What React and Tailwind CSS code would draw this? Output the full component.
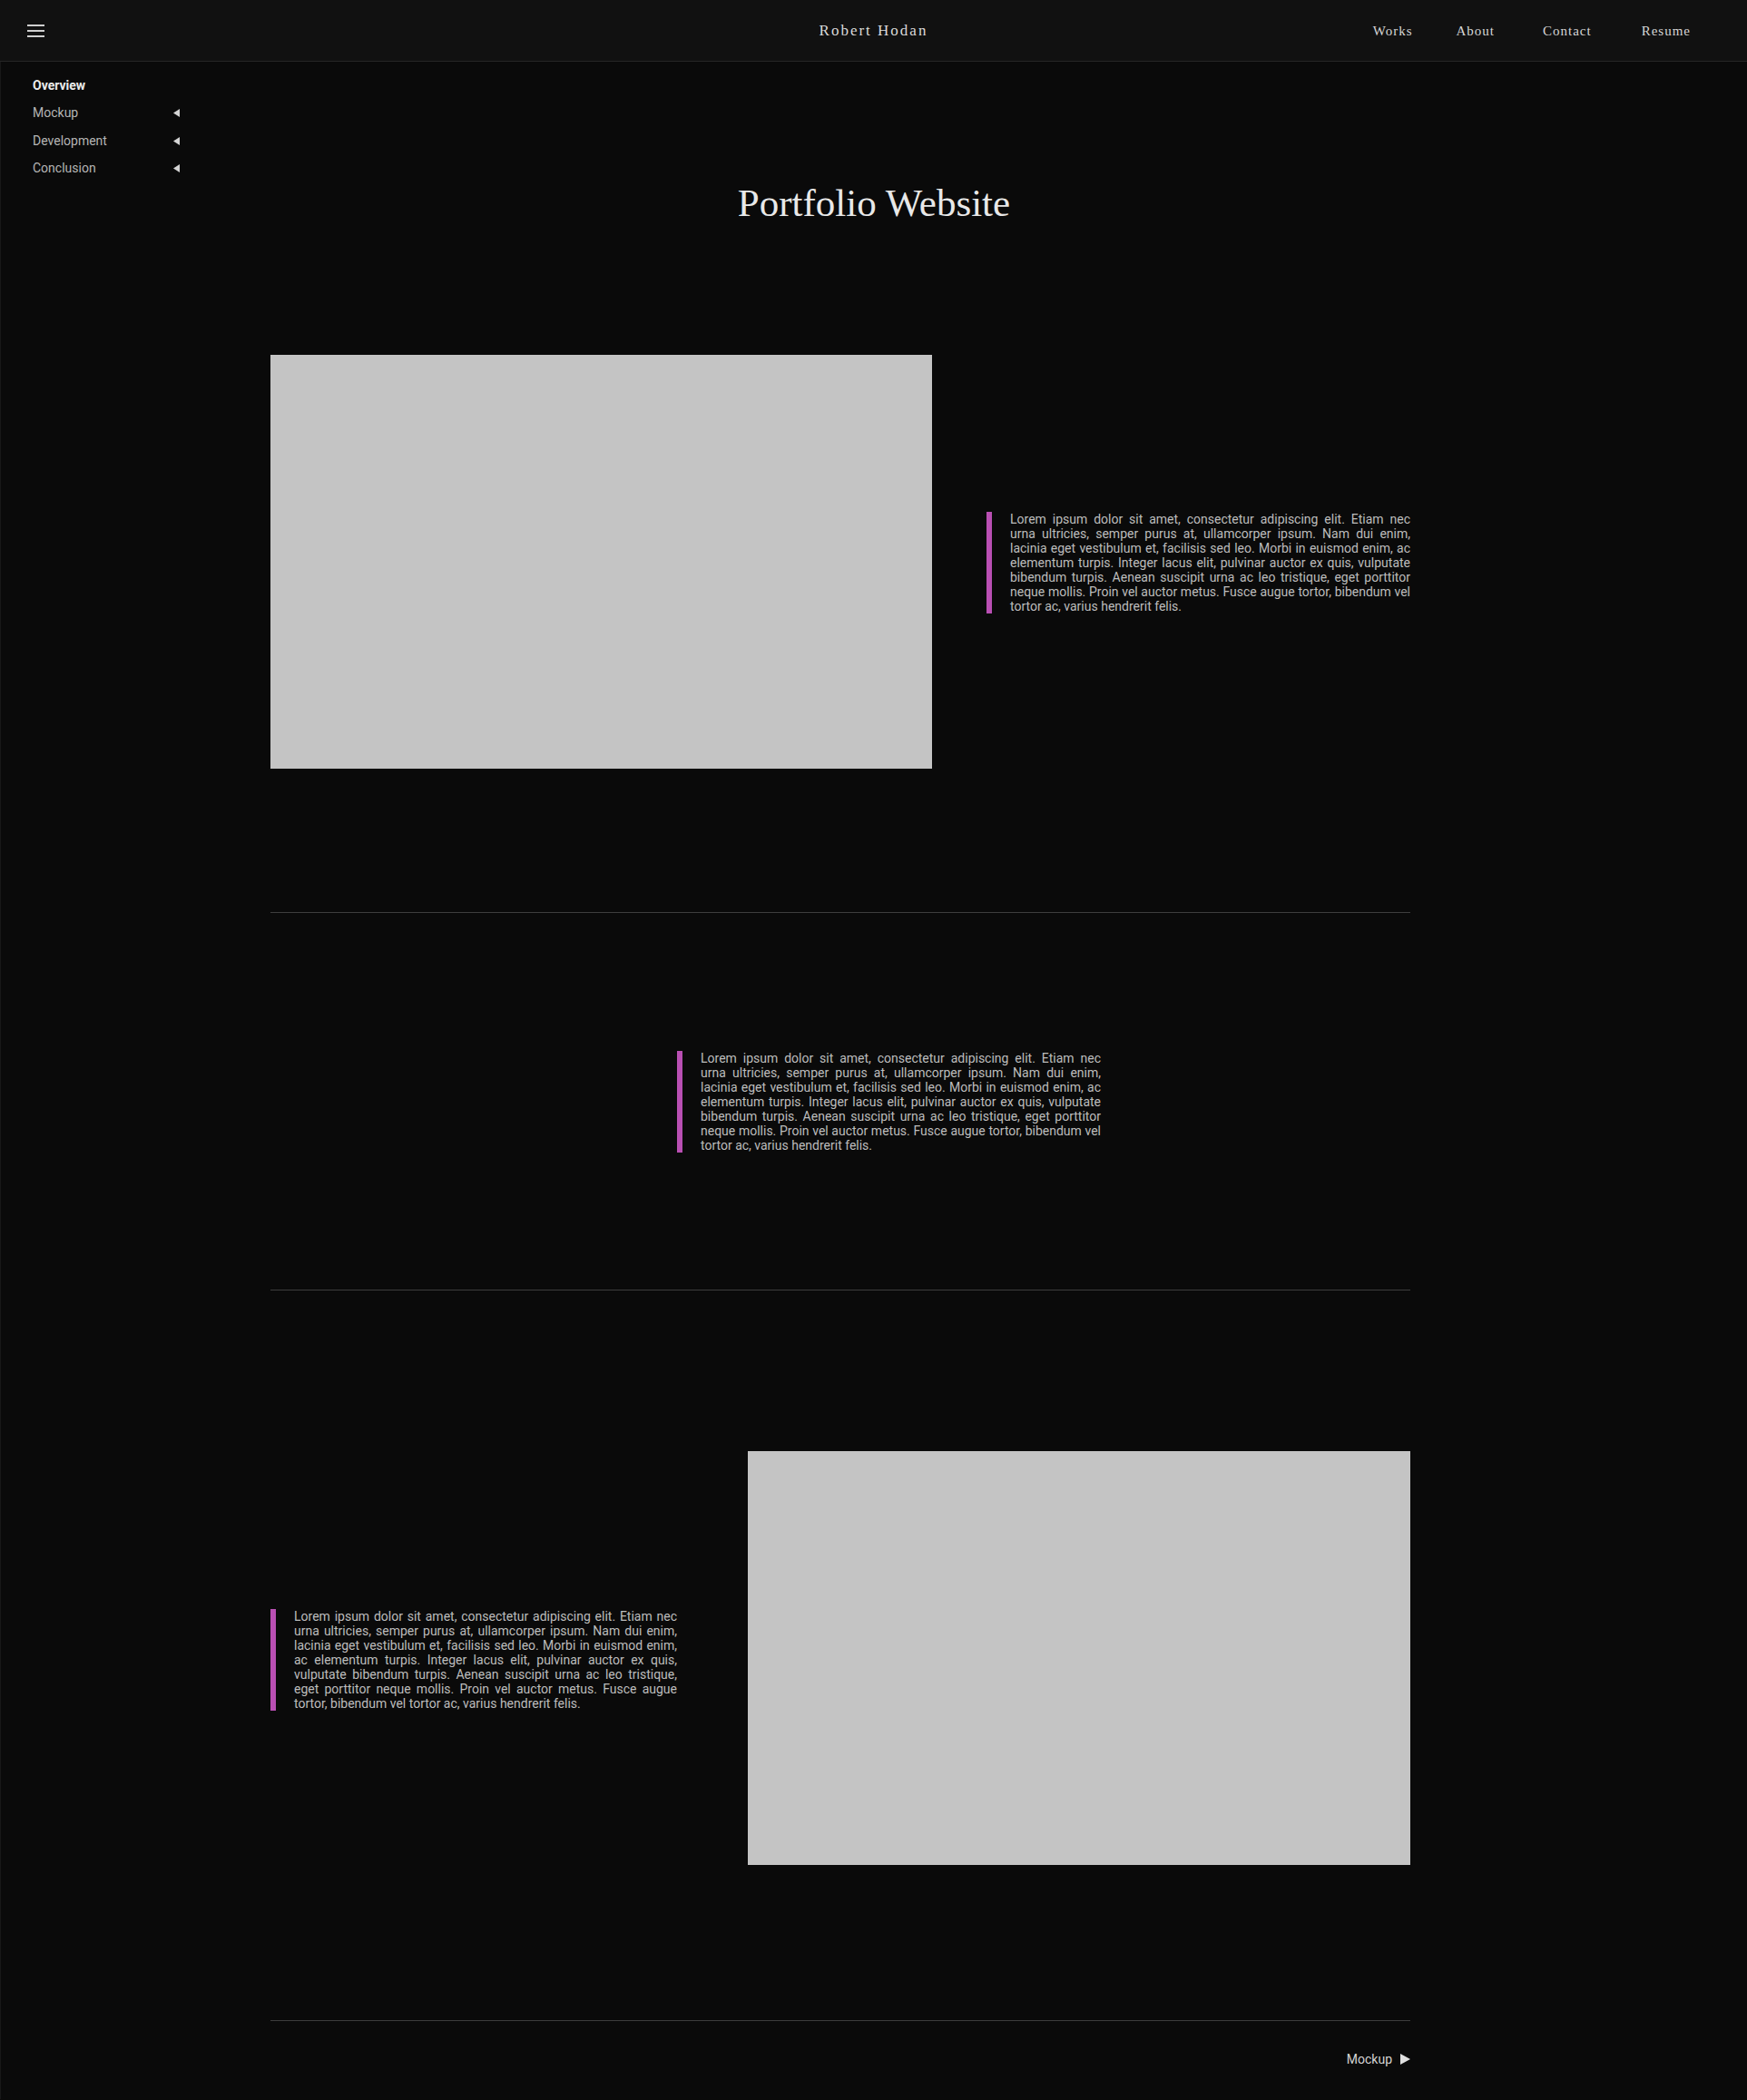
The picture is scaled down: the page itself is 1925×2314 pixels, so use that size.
import React from "react";

const LOREM =
  "Lorem ipsum dolor sit amet, consectetur adipiscing elit. Etiam nec urna ultricies, semper purus at, ullamcorper ipsum. Nam dui enim, lacinia eget vestibulum et, facilisis sed leo. Morbi in euismod enim, ac elementum turpis. Integer lacus elit, pulvinar auctor ex quis, vulputate bibendum turpis. Aenean suscipit urna ac leo tristique, eget porttitor neque mollis. Proin vel auctor metus. Fusce augue tortor, bibendum vel tortor ac, varius hendrerit felis.";

function Quote({ width }) {
  return (
    <div className={`border-l-[6px] border-[#b94fb3] pl-[20px] shrink-0 ${width}`}>
      <p className="text-[14px] leading-[16px] text-[#bdbdbd] text-justify font-['Roboto',sans-serif]">
        {LOREM}
      </p>
    </div>
  );
}

function LeftArrow() {
  return (
    <svg width="7" height="9" viewBox="0 0 7 9" className="fill-[#d4d4d4]">
      <path d="M7 0 L0 4.5 L7 9 Z" />
    </svg>
  );
}

export default function App() {
  const serif = "font-['Liberation_Serif','DejaVu_Serif',serif]";
  return (
    <div className="relative min-h-screen w-full bg-[#0a0a0a] font-['Roboto',sans-serif]">
      {/* Header */}
      <header className="grid grid-cols-3 items-center h-[68px] bg-[#111111] border-b border-[#262626]">
        <div className="pl-[30px] flex items-center">
          <svg width="19" height="14" viewBox="0 0 19 14" className="fill-[#cfcfcf]">
            <rect x="0" y="0" width="19" height="2" />
            <rect x="0" y="6" width="19" height="2" />
            <rect x="0" y="12" width="19" height="2" />
          </svg>
        </div>
        <div className={`text-center text-[17px] tracking-[2px] text-[#dadada] pt-[1px] ${serif}`}>
          Robert Hodan
        </div>
        <nav className={`flex justify-end items-center pr-[62px] pt-[1px] text-[15px] tracking-[1px] text-[#d6d6d6] ${serif}`}>
          <a>Works</a>
          <a className="ml-[48px]">About</a>
          <a className="ml-[53px]">Contact</a>
          <a className="ml-[55px]">Resume</a>
        </nav>
      </header>

      {/* Side navigation (floating) */}
      <aside className="absolute left-[36px] top-[79px] w-[162px] text-[14px]">
        <div className="h-[30px] flex items-center font-bold text-[#ececec]">Overview</div>
        <div className="h-[30px] flex items-center justify-between text-[#b5b5b5]">
          <span>Mockup</span>
          <LeftArrow />
        </div>
        <div className="h-[31px] pt-[2px] flex items-center justify-between text-[#b5b5b5]">
          <span>Development</span>
          <LeftArrow />
        </div>
        <div className="h-[30px] flex items-center justify-between text-[#b5b5b5]">
          <span>Conclusion</span>
          <LeftArrow />
        </div>
      </aside>

      <main className="border-l border-[#181818]">
        <h1 className={`pt-[132px] h-[180px] text-center text-[43px] leading-[48px] text-[#e8e8e8] font-normal ${serif}`}>
          Portfolio Website
        </h1>

        <div className="ml-[297px] w-[1256px]">
          {/* Section 1 */}
          <section className="mt-[143px] flex items-center">
            <div className="w-[729px] h-[456px] bg-[#c4c4c4] shrink-0" />
            <div className="ml-[60px] pt-[2px]">
              <Quote width="w-[467px]" />
            </div>
          </section>

          <hr className="mt-[158px] border-0 border-t border-[#3d3d3d]" />

          {/* Section 2 */}
          <section className="pt-[152px] pb-[151px] flex">
            <div className="ml-[448px]">
              <Quote width="w-[467px]" />
            </div>
          </section>

          <hr className="border-0 border-t border-[#3d3d3d]" />

          {/* Section 3 */}
          <section className="mt-[177px] flex items-center">
            <div className="pt-[4px]">
              <Quote width="w-[448px]" />
            </div>
            <div className="ml-[78px] w-[730px] h-[456px] bg-[#c4c4c4] shrink-0" />
          </section>

          <hr className="mt-[171px] border-0 border-t border-[#3d3d3d]" />

          {/* Footer nav */}
          <div className="pt-[32px] pb-[34px] flex justify-end items-center gap-[9px] text-[14px] leading-[20px] text-[#d4d4d4]">
            <span>Mockup</span>
            <svg width="11" height="12" viewBox="0 0 11 12" className="fill-[#e0e0e0]">
              <path d="M0 0 L11 6 L0 12 Z" />
            </svg>
          </div>
        </div>
      </main>
    </div>
  );
}
